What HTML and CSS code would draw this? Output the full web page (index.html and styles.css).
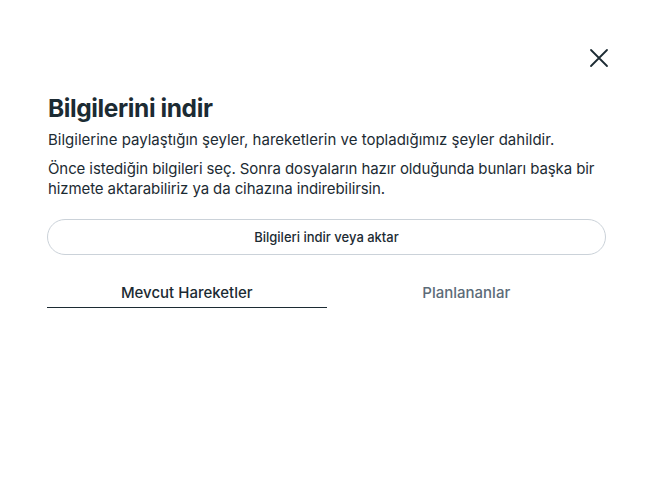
FILE: index.html
```html
<!DOCTYPE html>
<html lang="tr">
<head>
<meta charset="utf-8">
<link rel="stylesheet" href="styles.css">
</head>
<body>
<div class="page">
  <div class="topbar">
    <button class="close" aria-label="Kapat">
      <svg width="20" height="20" viewBox="0 0 20 20"><path d="M2 2 L18 18 M18 2 L2 18" stroke="#1c2b33" stroke-width="1.8" stroke-linecap="round" fill="none"/></svg>
    </button>
  </div>
  <h1 class="title">Bilgilerini indir</h1>
  <p class="lead">Bilgilerine paylaştığın şeyler, hareketlerin ve topladığımız şeyler dahildir.</p>
  <p class="desc">Önce istediğin bilgileri seç. Sonra dosyaların hazır olduğunda bunları başka bir hizmete aktarabiliriz ya da cihazına indirebilirsin.</p>
  <button class="action">Bilgileri indir veya aktar</button>
  <div class="tabs">
    <div class="tab active">Mevcut Hareketler</div>
    <div class="tab">Planlananlar</div>
  </div>
</div>
</body>
</html>
```
FILE: styles.css
```css
* { box-sizing: border-box; }
html, body { margin: 0; padding: 0; background: #fff; }
body { font-family: Inter, "Noto Sans", sans-serif; color: #1c2b33; }
.page { padding: 40px 44px 0 47px; }
.topbar { display: flex; justify-content: flex-end; height: 34px; }
.close { background: none; border: 0; padding: 0; width: 24px; height: 24px; display: flex; align-items: center; justify-content: center; margin-top: 6px; margin-right: -5px; cursor: pointer; }
.title { margin: 19px 0 0 1px; font-size: 24.5px; font-weight: 700; line-height: 30px; letter-spacing: -0.4px; }
.lead { margin: 7px 0 0 1px; font-size: 15px; line-height: 20px; }
.desc { margin: 9px 0 0 1px; font-size: 15px; line-height: 20px; letter-spacing: -0.1px; }
.action { display: block; width: 100%; margin-top: 20px; height: 36px; border: 1px solid #cbd2d9; border-radius: 18px; background: #fff; font-family: inherit; font-size: 13px; font-weight: 500; color: #1c2b33; }
.tabs { display: flex; margin-top: 28px; }
.tab { flex: 1; text-align: center; font-size: 15px; font-weight: 500; line-height: 20px; padding-bottom: 5px; color: #5c6b78; }
.tab.active { color: #1c2b33; border-bottom: 1.5px solid #1c2b33; padding-bottom: 2px; }
```
